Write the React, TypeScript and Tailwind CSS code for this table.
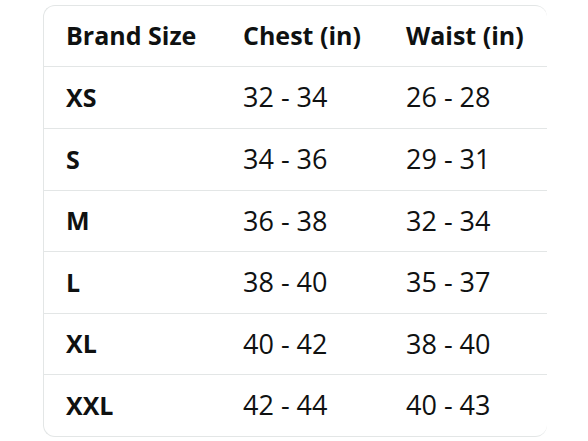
import React from "react";

const rows = [
  { s: "XS", c: "32 - 34", w: "26 - 28", h: "h-[62px]" },
  { s: "S", c: "34 - 36", w: "29 - 31", h: "h-[62px]" },
  { s: "M", c: "36 - 38", w: "32 - 34", h: "h-[61px]" },
  { s: "L", c: "38 - 40", w: "35 - 37", h: "h-[62px]" },
  { s: "XL", c: "40 - 42", w: "38 - 40", h: "h-[61px]" },
  { s: "XXL", c: "42 - 44", w: "40 - 43", h: "h-[61px]" },
];

export default function App() {
  return (
    <div
      className="w-[588px] h-[441px] bg-white pt-[5px] pl-[43px] text-[#0f1111]"
      style={{ fontFamily: '"Open Sans", "Noto Sans", sans-serif' }}
    >
      <div className="w-[504px] rounded-[12px] border border-r-0 border-[#e3e6e6] overflow-hidden">
        <div className="flex h-[61px] items-center font-bold text-[25px] border-b border-[#e3e6e6]">
          <div className="w-[177px] pl-[22px]">Brand Size</div>
          <div className="w-[163px] pl-[22px]">Chest (in)</div>
          <div className="w-[163px] pl-[22px]">Waist (in)</div>
        </div>
        {rows.map((r, i) => (
          <div
            key={r.s}
            className={
              i === rows.length - 1
                ? `flex ${r.h} items-center`
                : `flex ${r.h} items-center border-b border-[#e3e6e6]`
            }
          >
            <div className="w-[177px] pl-[22px] font-bold text-[25px]">{r.s}</div>
            <div className="w-[163px] pl-[22px] text-[27px]">{r.c}</div>
            <div className="w-[163px] pl-[22px] text-[27px]">{r.w}</div>
          </div>
        ))}
      </div>
    </div>
  );
}
